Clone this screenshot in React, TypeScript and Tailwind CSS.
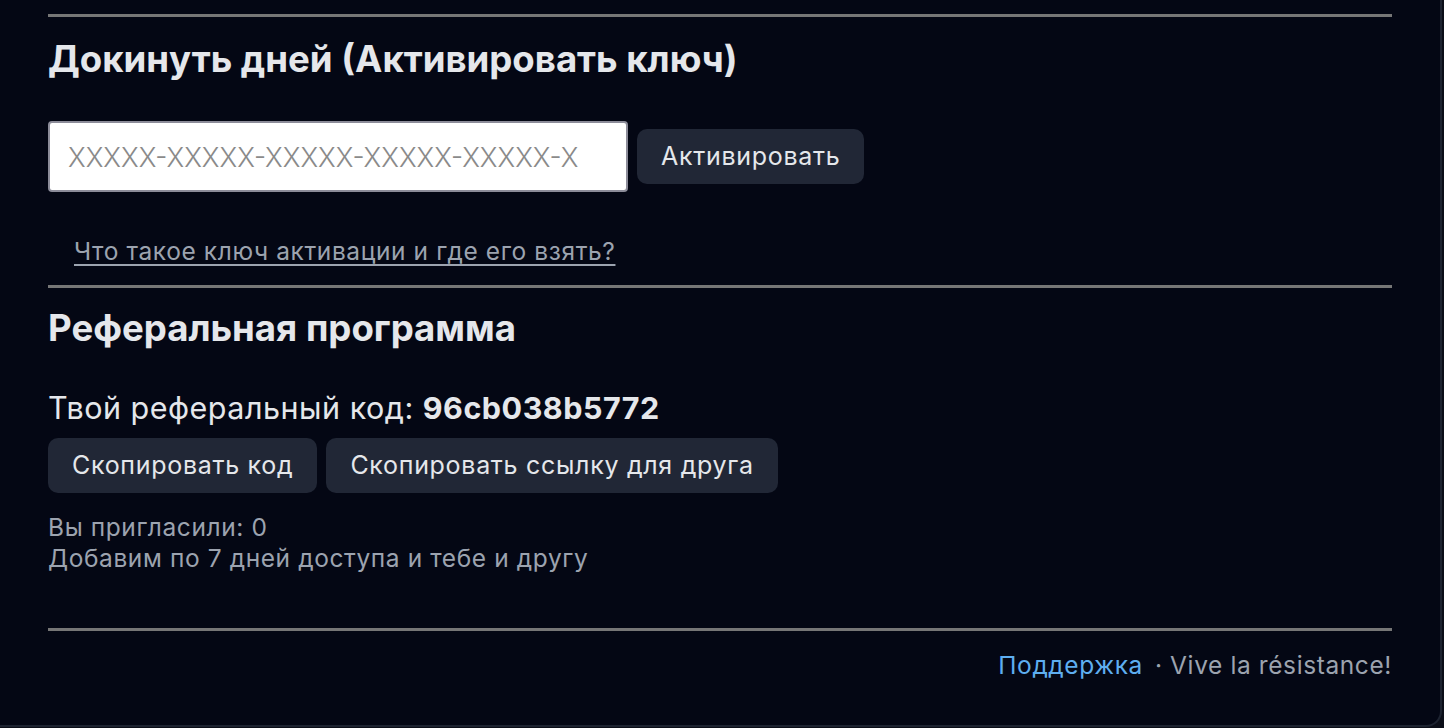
const App = () => {
  return (
    <div className="min-h-screen bg-[#0b0e18] font-['Inter',sans-serif]">
      <div className="w-[1442px] h-[727px] bg-[#040714] border-r-2 border-b-2 border-[#1d2330] rounded-br-[16px] pl-[48px] pr-[48px] pt-[14px] text-[#e5e7eb]">
        <hr className="border-0 h-[3px] bg-[#767676]" />

        <h2 className="mt-[20px] text-[36.6px] leading-[44px] font-bold">
          Докинуть дней (Активировать ключ)
        </h2>

        <div className="mt-[40px] flex items-center gap-[9px]">
          <input
            type="text"
            placeholder="XXXXX-XXXXX-XXXXX-XXXXX-XXXXX-X"
            className="w-[580px] h-[71px] bg-white border-2 border-[#8c8c99] rounded-[4px] pl-[18px] text-[26.7px] text-gray-900 placeholder:text-[#8a8a8a] font-light outline-none"
          />
          <button className="h-[55px] px-[24px] rounded-[10px] bg-[#212736] text-[25px] tracking-[0.7px] text-[#e5e7eb]">
            Активировать
          </button>
        </div>

        <div className="mt-[44px] pl-[26px]">
          <a href="#" className="text-[24.5px] leading-[31px] tracking-[0.6px] text-[#9ca3af] underline underline-offset-[4px]">
            Что такое ключ активации и где его взять?
          </a>
        </div>

        <hr className="mt-[18px] border-0 h-[3px] bg-[#767676]" />

        <h2 className="mt-[18px] text-[36.6px] leading-[44px] font-bold">
          Реферальная программа
        </h2>

        <p className="mt-[40px] text-[30.5px] leading-[36px] tracking-[0.5px]">
          Твой реферальный код: <span className="font-bold">96cb038b5772</span>
        </p>

        <div className="mt-[12px] flex gap-[9px]">
          <button className="h-[55px] px-[24px] rounded-[10px] bg-[#212736] text-[25px] tracking-[0.7px] text-[#e5e7eb]">
            Скопировать код
          </button>
          <button className="h-[55px] px-[24px] rounded-[10px] bg-[#212736] text-[25px] tracking-[0.7px] text-[#e5e7eb]">
            Скопировать ссылку для друга
          </button>
        </div>

        <div className="mt-[19px] text-[24.5px] leading-[31px] tracking-[0.6px] text-[#9ca3af]">
          <p>Вы пригласили: 0</p>
          <p>Добавим по 7 дней доступа и тебе и другу</p>
        </div>

        <hr className="mt-[54px] border-0 h-[3px] bg-[#767676]" />

        <div className="mt-[19px] flex justify-end text-[24.5px] leading-[31px] tracking-[0.6px] text-[#9ca3af]">
          <a href="#" className="text-[#5eaef0]">
            Поддержка
          </a>
          <span className="ml-[12px]">· Vive la résistance!</span>
        </div>
      </div>
    </div>
  );
};

export default App;
